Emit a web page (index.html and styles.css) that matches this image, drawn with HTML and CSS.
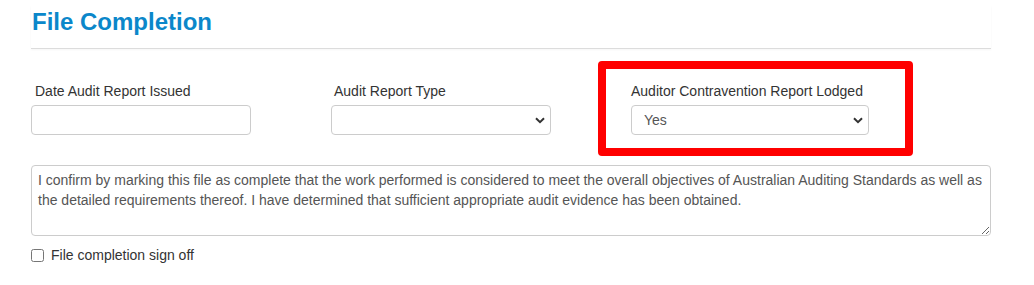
FILE: index.html
```html
<!DOCTYPE html>
<html lang="en">
<head>
    <meta charset="UTF-8">
    <title>File Completion</title>
    <link rel="stylesheet" href="styles.css">
</head>
<body>
    <main class="panel">
        <h1 class="panel-title">File Completion</h1>
        <div class="field-row">
            <div class="field">
                <label for="auditDate">Date Audit Report Issued</label>
                <input type="text" id="auditDate" class="field-input">
            </div>
            <div class="field field-type">
                <label for="reportType">Audit Report Type</label>
                <select id="reportType" class="field-input">
                    <option></option>
                </select>
            </div>
            <div class="field field-flagged">
                <label for="contravention">Auditor Contravention Report Lodged</label>
                <select id="contravention" class="field-input">
                    <option>Yes</option>
                    <option>No</option>
                </select>
            </div>
        </div>
        <textarea class="confirm-text" readonly>I confirm by marking this file as complete that the work performed is considered to meet the overall objectives of Australian Auditing Standards as well as the detailed requirements thereof. I have determined that sufficient appropriate audit evidence has been obtained.</textarea>
        <label class="signoff">
            <input type="checkbox">
            <span>File completion sign off</span>
        </label>
    </main>
</body>
</html>
```

FILE: styles.css
```css
*, *::after {
    margin: 0;
    padding: 0;
    box-sizing: border-box;
}

body {
    font-family: "Liberation Sans", Arial, sans-serif;
    font-size: 14px;
    color: #333;
    background: #fff;
}

.panel {
    width: 960px;
    margin-left: 31px;
    padding-top: 6px;
}

.panel-title {
    font-size: 24px;
    font-weight: bold;
    color: #0b87ca;
    line-height: 32px;
    padding-left: 1px;
    padding-bottom: 10px;
    border-bottom: 1px solid #dcdcdc;
    box-shadow: 0 1px 2px rgba(0, 0, 0, 0.04);
}

.field-row {
    display: flex;
    padding-top: 32px;
}

.field {
    width: 300px;
    display: flex;
    flex-direction: column;
}

.field label {
    line-height: 20px;
    padding-left: 4px;
    margin-bottom: 4px;
}

.field-type label {
    padding-left: 3px;
}

.field-input {
    width: 220px;
    height: 30px;
    border: 1px solid #ccc;
    border-radius: 4px;
    background: #fff;
    font-family: inherit;
    font-size: 14px;
    color: #555;
    padding: 0 8px;
}

select.field-input {
    appearance: none;
    padding-left: 12px;
    background-image: url("data:image/svg+xml,%3Csvg xmlns='http://www.w3.org/2000/svg' width='10' height='7' viewBox='0 0 10 7'%3E%3Cpath d='M1 1.2l4 4 4-4' fill='none' stroke='%23333' stroke-width='2'/%3E%3C/svg%3E");
    background-repeat: no-repeat;
    background-position: right 5px center;
}

.field-flagged {
    position: relative;
}

.field-flagged label {
    padding-left: 0;
}

.field-flagged .field-input {
    width: 238px;
}

/* red annotation box drawn over the column */
.field-flagged::after {
    content: "";
    position: absolute;
    left: -33px;
    top: -20px;
    width: 315px;
    height: 95px;
    border: 8px solid #ff0000;
    border-radius: 4px;
    pointer-events: none;
}

.confirm-text {
    display: block;
    width: 960px;
    height: 71px;
    margin-top: 30px;
    padding: 4px 6px;
    border: 1px solid #ccc;
    border-radius: 4px;
    font-family: inherit;
    font-size: 14px;
    line-height: 20px;
    color: #555;
    resize: vertical;
}

.signoff {
    display: flex;
    align-items: center;
    gap: 7px;
    margin-top: 9px;
    line-height: 20px;
}

.signoff input {
    width: 13px;
    height: 13px;
    margin: 0;
}
```
